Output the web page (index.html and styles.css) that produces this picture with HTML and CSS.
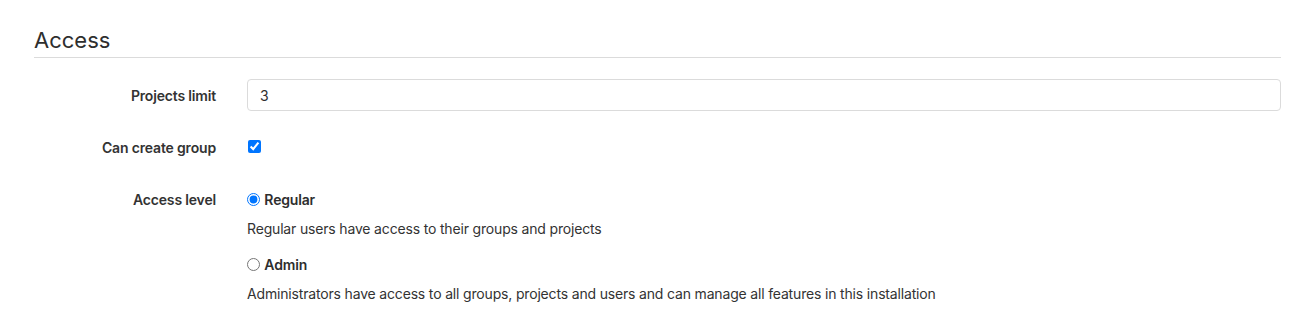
FILE: index.html
```html
<!DOCTYPE html>
<html lang="en">
<head>
    <meta charset="UTF-8">
    <title>Access</title>
    <link rel="stylesheet" href="styles.css">
</head>
<body>
    <fieldset class="access">
        <legend>Access</legend>

        <div class="form-group">
            <label for="projects-limit" class="col-label">Projects limit</label>
            <div class="col-field">
                <input type="number" id="projects-limit" class="form-control" value="3">
            </div>
        </div>

        <div class="form-group">
            <label for="can-create-group" class="col-label">Can create group</label>
            <div class="col-field">
                <input type="checkbox" id="can-create-group" class="check" checked>
            </div>
        </div>

        <div class="form-group">
            <span class="col-label">Access level</span>
            <div class="col-field">
                <label class="radio-label"><input type="radio" name="access" class="radio" checked> Regular</label>
                <p class="help">Regular users have access to their groups and projects</p>
                <label class="radio-label"><input type="radio" name="access" class="radio"> Admin</label>
                <p class="help">Administrators have access to all groups, projects and users and can manage all features in this installation</p>
            </div>
        </div>
    </fieldset>
</body>
</html>
```

FILE: styles.css
```css
body {
    font-family: Inter, "Liberation Sans", sans-serif;
    font-size: 14px;
    letter-spacing: -0.17px;
    color: #2e2e2e;
    margin: 0;
    padding: 0 18px 0 34px;
    background: #fff;
}
.access {
    border: none;
    margin: 0;
    padding: 0;
    min-width: 0;
}
legend {
    display: block;
    width: 100%;
    font-size: 22px;
    font-weight: 400;
    letter-spacing: 0;
    color: #2e2e2e;
    padding: 29px 0 5px;
    border-bottom: 1px solid #dbdbdb;
    margin-bottom: 21px;
    line-height: 23px;
}
.form-group {
    display: grid;
    grid-template-columns: 182px 1fr;
    column-gap: 31px;
    margin-bottom: 19px;
}
.form-group:last-child {
    margin-bottom: 0;
}
.col-label {
    text-align: right;
    font-weight: 600;
    color: #333;
    line-height: 32px;
    padding-top: 1px;
}
.form-control {
    box-sizing: border-box;
    width: 100%;
    height: 32px;
    padding: 0 12px;
    border: 1px solid #dbdbdb;
    border-radius: 4px;
    font-family: inherit;
    font-size: 14px;
    color: #2e2e2e;
    -moz-appearance: textfield;
}
.form-control::-webkit-inner-spin-button {
    -webkit-appearance: none;
}
.check {
    margin: 9px 0 0 1px;
    width: 13px;
    height: 13px;
}
.radio-label {
    display: block;
    font-weight: 600;
    line-height: 32px;
    padding-top: 1px;
}
.radio {
    margin: 0 1px 0 0;
    width: 13px;
    height: 13px;
    vertical-align: -1px;
}
.help {
    margin: 0 0 6px;
    line-height: 26px;
    color: #333;
}
.help:last-child {
    margin-bottom: 0;
}
```
